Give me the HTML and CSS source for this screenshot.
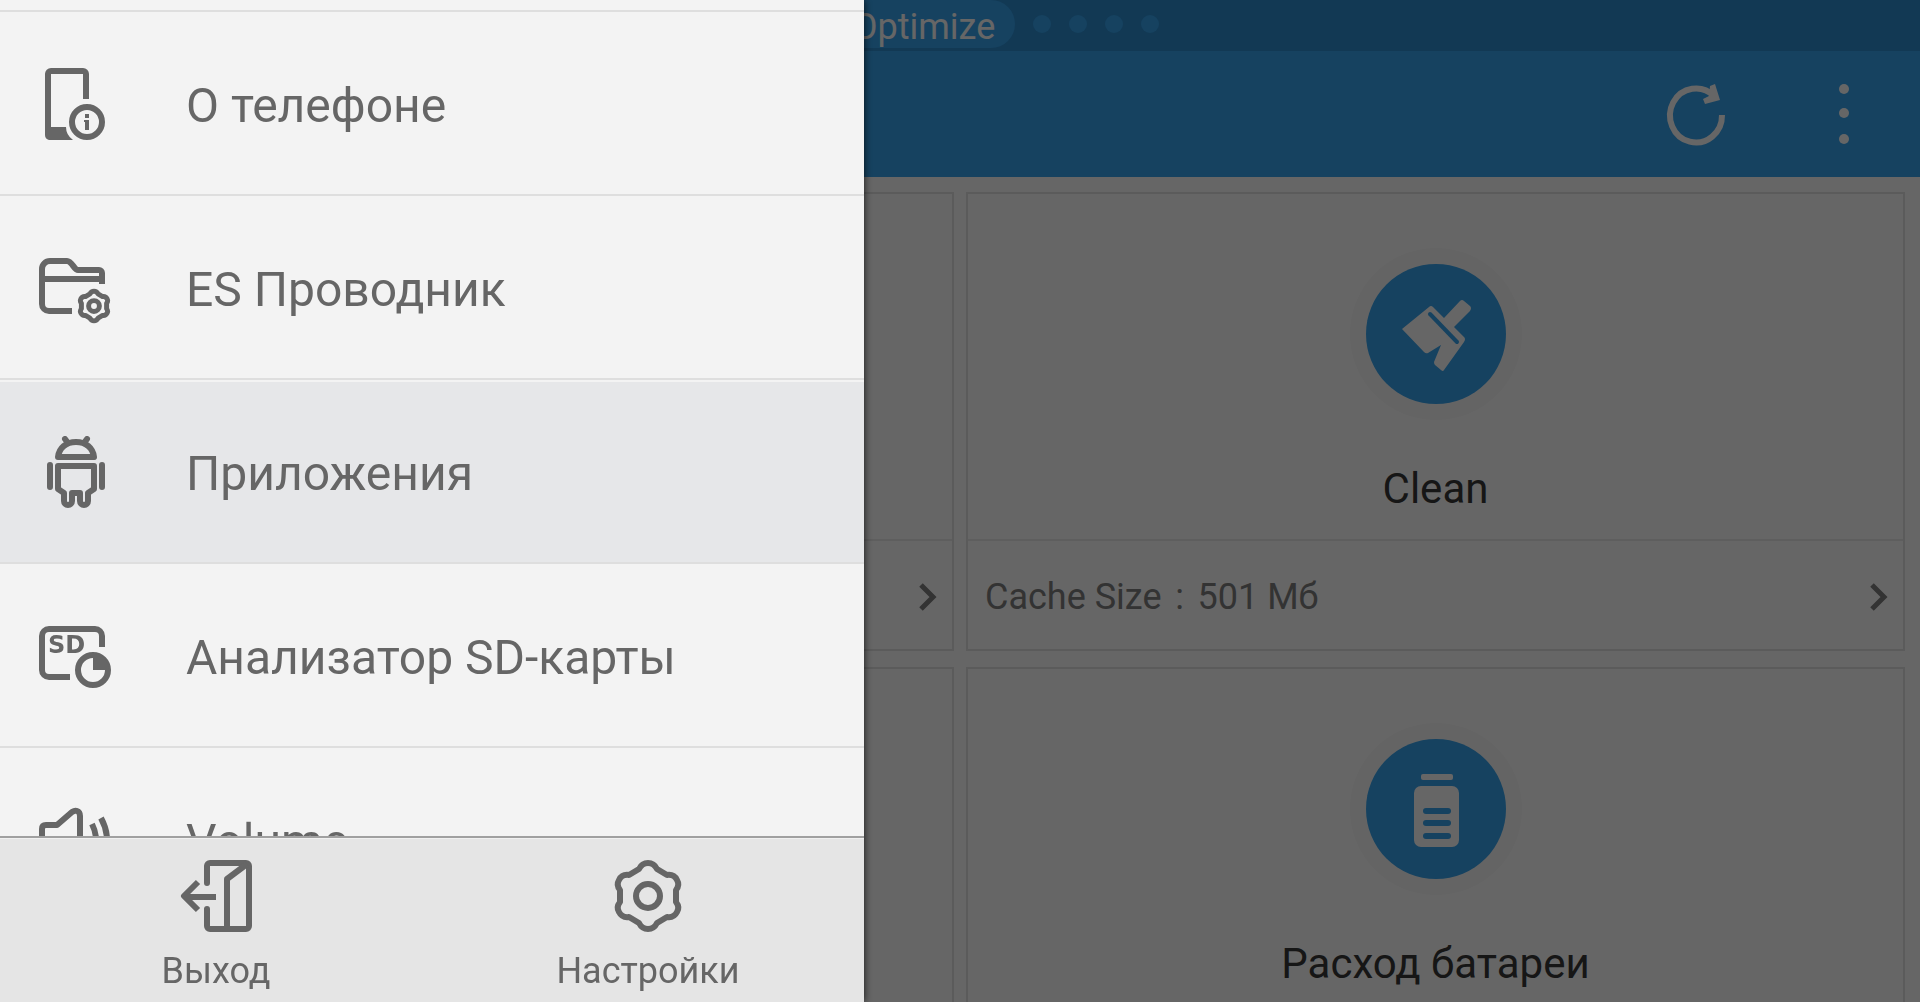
FILE: index.html
```html
<!DOCTYPE html>
<html lang="ru">
<head>
    <meta charset="UTF-8">
    <meta name="viewport" content="width=device-width, initial-scale=1.0">
    <title>Optimize</title>
    <link rel="stylesheet" href="styles.css">
</head>
<body>
    <main class="page">
        <nav class="tabs">
            <span class="dot"></span>
            <span class="dot"></span>
            <a class="tab" href="#">Optimize</a>
            <span class="dot"></span>
            <span class="dot"></span>
            <span class="dot"></span>
            <span class="dot"></span>
        </nav>
        <header class="toolbar">
            <button type="button" aria-label="Обновить">
                <svg class="icon" viewBox="0 0 72 72">
                    <path d="M62 37A26 27 0 1 1 54 18"/>
                    <path class="solid" d="M50 8L55 6L60 22L45 26L43 21L49 18Z"/>
                </svg>
            </button>
            <button type="button" aria-label="Меню">
                <svg class="icon" viewBox="0 0 72 72">
                    <g class="solid">
                        <circle cx="36" cy="11" r="5"/>
                        <circle cx="36" cy="35" r="5"/>
                        <circle cx="36" cy="61" r="5"/>
                    </g>
                </svg>
            </button>
        </header>
        <div class="cards">
            <section class="card">
                <div class="card-top"></div>
                <a class="card-link" href="#" aria-label="Открыть">
                    <svg class="chevron" viewBox="0 0 18 28"><path d="M2 2L14 14L2 26"/></svg>
                </a>
            </section>
            <section class="card">
                <div class="card-top">
                    <div class="halo">
                        <svg class="badge" viewBox="0 0 140 140">
                            <circle class="disc" cx="70" cy="70" r="70"/>
                            <path class="shape" d="M36 65L63 43Q65 41 67 43L78 54L94 37Q96 35 98 37L104 42Q106 44 104 47L88 63L98 73Q100 75 98 78L78 106Q77 108 75 106L69 101Q68 100 68 98L75 81L62 89Q60 90 58 88Z"/>
                            <path class="slit" d="M64 50L91 78"/>
                        </svg>
                    </div>
                    <h2>Clean</h2>
                </div>
                <a class="card-link" href="#">
                    <span>Cache Size<span class="colon">:</span>501 Мб</span>
                    <svg class="chevron" viewBox="0 0 18 28"><path d="M2 2L14 14L2 26"/></svg>
                </a>
            </section>
            <section class="card">
                <div class="card-top"></div>
            </section>
            <section class="card">
                <div class="card-top">
                    <div class="halo">
                        <svg class="badge" viewBox="0 0 140 140">
                            <circle class="disc" cx="70" cy="70" r="70"/>
                            <rect class="shape" x="55" y="35" width="32" height="6" rx="2"/>
                            <rect class="shape" x="48" y="47" width="45" height="61" rx="7"/>
                            <rect class="disc" x="57" y="69" width="28" height="6" rx="3"/>
                            <rect class="disc" x="57" y="81" width="28" height="6" rx="3"/>
                            <rect class="disc" x="57" y="94" width="28" height="6" rx="3"/>
                        </svg>
                    </div>
                    <h2>Расход батареи</h2>
                </div>
            </section>
        </div>
    </main>

    <div class="scrim"></div>

    <aside class="drawer">
        <ul class="menu">
            <li>
                <button type="button">
                    <svg class="icon" viewBox="0 0 72 72">
                        <path d="M47 31V6a3 3 0 0 0-3-3H12a3 3 0 0 0-3 3V66"/>
                        <path class="solid" d="M6 59H27Q27 67 34 72H10Q6 71 6 67Z"/>
                        <circle cx="48" cy="54" r="15"/>
                        <rect class="solid" x="46" y="46" width="4" height="4"/>
                        <path class="solid" d="M45 52h5v10h-4v-8h-1z"/>
                    </svg>
                    <span>О телефоне</span>
                </button>
            </li>
            <li>
                <button type="button">
                    <svg class="icon" viewBox="0 0 72 72">
                        <path d="M63 32V21a3 3 0 0 0-3-3H39C35 18 33 9 28 9H11a8 8 0 0 0-8 8V52a7 7 0 0 0 7 7H33"/>
                        <path d="M3 27H63"/>
                        <g class="small-gear" transform="translate(55 54) scale(.45)">
                            <path d="M-9-27Q-6-33 0-33Q6-33 9-27L19-21Q26-22 29-16Q32-11 28-6V6Q32 11 29 16Q26 22 19 21L9 27Q6 33 0 33Q-6 33-9 27L-19 21Q-26 22-29 16Q-32 11-28 6V-6Q-32-11-29-16Q-26-22-19-21Z"/>
                            <circle r="12"/>
                        </g>
                    </svg>
                    <span>ES Проводник</span>
                </button>
            </li>
            <li>
                <button type="button" class="selected">
                    <svg class="icon" viewBox="0 0 72 72">
                        <path d="M19 21C20 12 27 6 37 6S54 12 55 21Z"/>
                        <path class="round" d="M26 3L29 7M48 3L45 7M11 29V51M63 29V51"/>
                        <path d="M19 30H55V53L49 57V65a4 4 0 0 1-8 0V57H33V65a4 4 0 0 1-8 0V57L19 53Z"/>
                    </svg>
                    <span>Приложения</span>
                </button>
            </li>
            <li>
                <button type="button">
                    <svg class="icon" viewBox="0 0 72 72">
                        <path d="M63 27V16a7 7 0 0 0-7-7H10a7 7 0 0 0-7 7V50a7 7 0 0 0 7 7H31"/>
                        <text x="9" y="33">SD</text>
                        <circle cx="54" cy="50" r="15"/>
                        <path class="solid" d="M54 50V34A16 16 0 0 1 70 50Z"/>
                    </svg>
                    <span>Анализатор SD-карты</span>
                </button>
            </li>
            <li>
                <button type="button">
                    <svg class="icon" viewBox="0 0 72 72">
                        <path d="M3 36V25Q3 21 7 21H18L33 8Q36 6 38 7Q41 8 41 12V60Q41 66 36 66L18 51H7Q3 51 3 47Z"/>
                        <path d="M53 20Q61 36 53 52M62 14Q74 36 62 58"/>
                    </svg>
                    <span>Volume</span>
                </button>
            </li>
        </ul>
        <footer class="actions">
            <button type="button">
                <svg class="icon" viewBox="0 0 72 72">
                    <path class="round" d="M27 23V6a3 3 0 0 1 3-3H66a3 3 0 0 1 3 3V66a3 3 0 0 1-3 3H30a3 3 0 0 1-3-3V49"/>
                    <path d="M67 4L47 19V69M36 37H4M18 22L4 36L18 50"/>
                </svg>
                <span>Выход</span>
            </button>
            <button type="button">
                <svg class="icon" viewBox="-36 -36 72 72">
                    <path d="M-9-27Q-6-33 0-33Q6-33 9-27L19-21Q26-22 29-16Q32-11 28-6V6Q32 11 29 16Q26 22 19 21L9 27Q6 33 0 33Q-6 33-9 27L-19 21Q-26 22-29 16Q-32 11-28 6V-6Q-32-11-29-16Q-26-22-19-21Z"/>
                    <circle r="12"/>
                </svg>
                <span>Настройки</span>
            </button>
        </footer>
    </aside>
</body>
</html>
```
FILE: styles.css
```css
* {
    box-sizing: border-box;
}
body {
    margin: 0;
    height: 100vh;
    overflow: hidden;
    font-family: Roboto, sans-serif;
    background-color: #ffffff;
}
button {
    padding: 0;
    border: none;
    background: none;
    font: inherit;
    color: inherit;
}
a {
    color: inherit;
    text-decoration: none;
}

/* icons */
.icon {
    display: block;
    flex: none;
    width: 72px;
    height: 72px;
    fill: none;
    stroke: currentColor;
    stroke-width: 6;
    stroke-linejoin: round;
}
.icon .solid {
    fill: currentColor;
    stroke: none;
}
.icon .round {
    stroke-linecap: round;
}
.icon text {
    font: bold 24px "DejaVu Sans", sans-serif;
    fill: currentColor;
    stroke: none;
}
.small-gear {
    stroke-width: 11;
}

/* page behind the drawer */
.page {
    height: 100%;
    overflow: hidden;
}
.tabs {
    display: flex;
    justify-content: center;
    align-items: center;
    gap: 18px;
    height: 51px;
    padding-bottom: 3px;
    background-color: #2d8ed2;
}
.tab {
    height: 48px;
    padding: 0 20px;
    border-radius: 24px;
    background-color: #37a5f0;
    color: #ffffff;
    font-size: 36px;
    line-height: 54px;
}
.dot {
    width: 18px;
    height: 18px;
    border-radius: 50%;
    background-color: #37a5f0;
}
.toolbar {
    display: flex;
    justify-content: flex-end;
    align-items: center;
    gap: 76px;
    height: 126px;
    padding-right: 40px;
    background-color: #37a5f0;
    color: #ffffff;
}
.cards {
    display: grid;
    grid-template-columns: 1fr 1fr;
    gap: 16px 12px;
    padding: 15px;
}
.card {
    border: 2px solid #e4e4e4;
}
.card-top {
    height: 347px;
    padding-top: 54px;
    border-bottom: 2px solid #ebebeb;
    text-align: center;
}
.halo {
    width: 172px;
    margin: 0 auto 44px;
    padding: 16px;
    border-radius: 50%;
    background-color: #fafafa;
}
.badge {
    display: block;
}
.disc {
    fill: #37a5f0;
}
.shape {
    fill: #ffffff;
}
.slit {
    stroke: #37a5f0;
    stroke-width: 4;
    stroke-linecap: round;
}
.card h2 {
    margin: 0;
    font-size: 42px;
    font-weight: normal;
    line-height: 50px;
    color: #383838;
}
.card-link {
    display: flex;
    align-items: center;
    height: 108px;
    padding: 4px 15px 0 17px;
    font-size: 36px;
    line-height: 42px;
    color: #808080;
}
.colon {
    display: inline-block;
    width: 36px;
    text-align: center;
}
.chevron {
    width: 18px;
    height: 28px;
    margin-left: auto;
    fill: none;
    stroke: #808080;
    stroke-width: 5;
}
.scrim {
    position: fixed;
    inset: 0;
    background-color: rgba(0, 0, 0, .6);
}

/* drawer */
.drawer {
    position: fixed;
    top: 0;
    bottom: 0;
    left: 0;
    display: flex;
    flex-direction: column;
    width: 45%;
    background-color: #f3f3f3;
    color: #666666;
    box-shadow: 0 0 8px rgba(0, 0, 0, .8);
}
.menu {
    flex: 1;
    min-height: 0;
    margin: 0;
    padding: 10px 0 0;
    overflow: hidden;
    list-style: none;
}
.menu li {
    padding-top: 2px;
    border-top: 2px solid #dedede;
}
.menu button {
    display: flex;
    align-items: center;
    gap: 75px;
    width: 100%;
    height: 180px;
    padding-left: 39px;
    font-size: 48px;
    line-height: 56px;
    text-align: left;
}
.menu span {
    padding-top: 4px;
}
.menu .selected {
    background-color: #e6e7e9;
}
.actions {
    display: flex;
    height: 166px;
    border-top: 2px solid #a0a0a0;
    background-color: #e5e5e5;
    box-shadow: inset 0 1px #f0f0f0;
}
.actions button {
    display: flex;
    flex: 1;
    flex-direction: column;
    align-items: center;
    gap: 18px;
    padding-top: 22px;
    font-size: 36px;
    line-height: 42px;
}
```
